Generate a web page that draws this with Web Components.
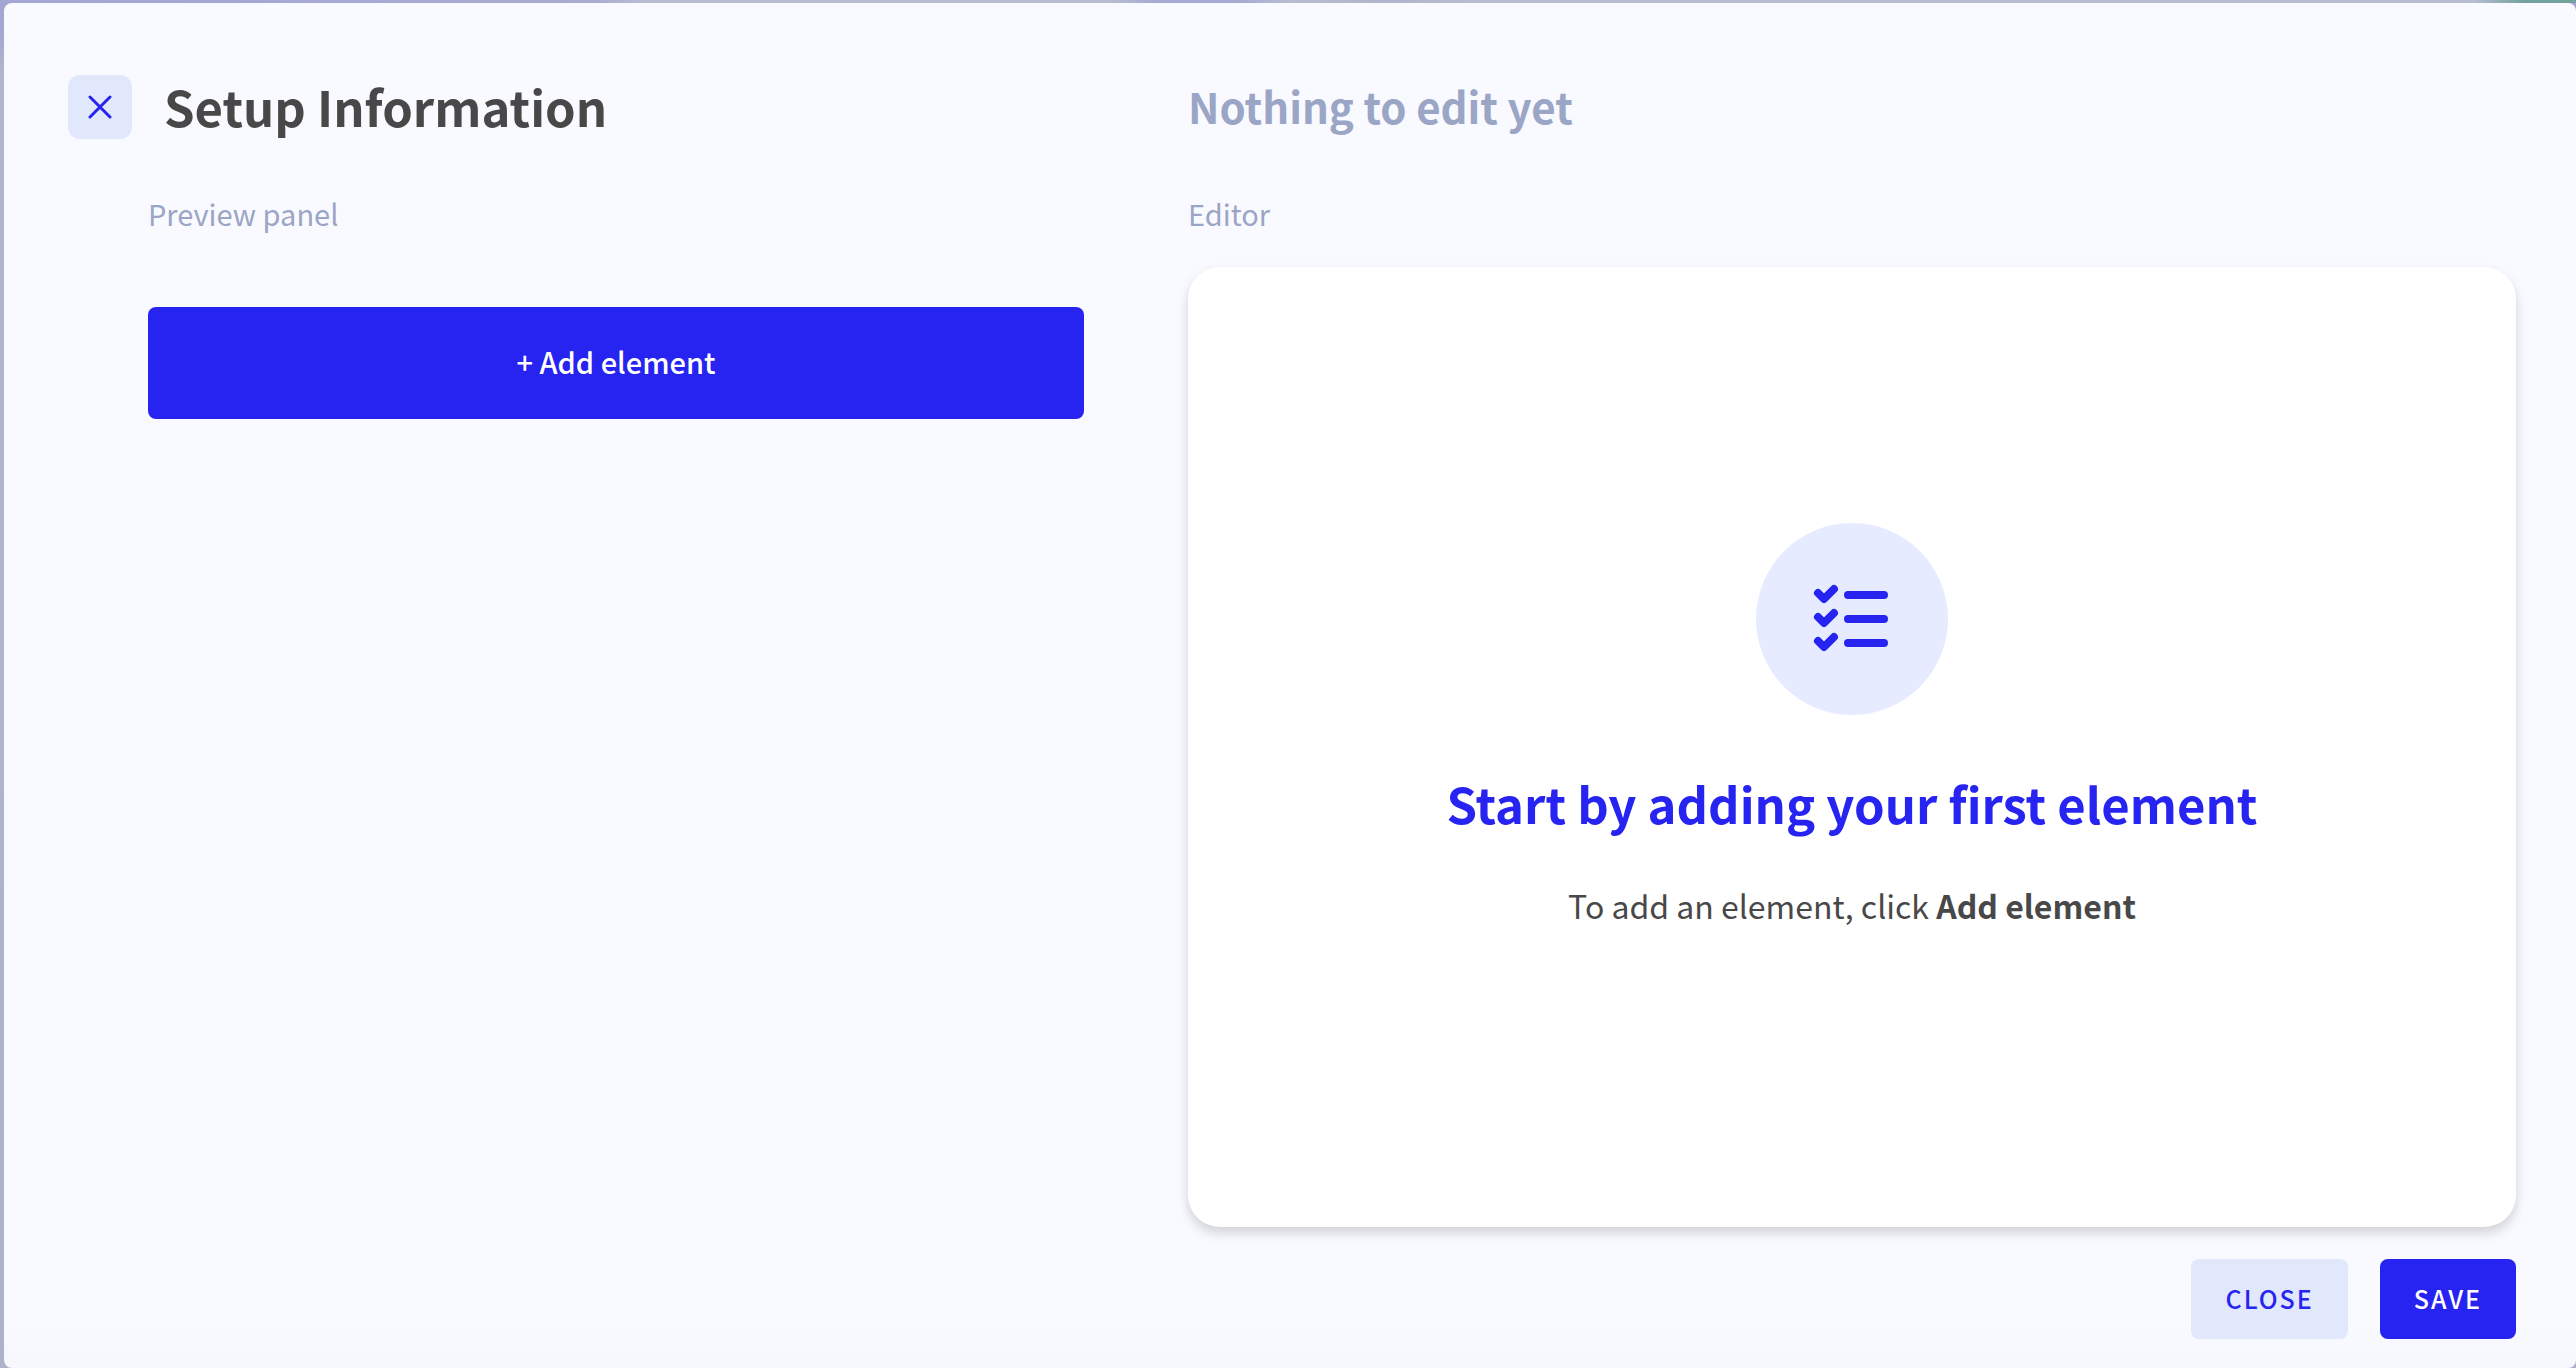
<!DOCTYPE html>
<html lang="en">
<head>
<meta charset="UTF-8">
<meta name="viewport" content="width=device-width, initial-scale=1.0">
<title>Setup Information</title>
<style>
  html, body {
    height: 100%;
    margin: 0;
  }
  body {
    font-family: "Noto Sans CJK SC", "Noto Sans", sans-serif;
    color: #484848;
    --primary: #2723f0;
    --primary-light: #e2e8fc;
    --muted: #9ba5c6;
    --surface: #f9faff;
  }
</style>
</head>
<body>
<setup-modal>
  <panel-header slot="preview-header" closable>Setup Information</panel-header>
  <preview-panel slot="preview"></preview-panel>
  <panel-header slot="editor-header" muted>Nothing to edit yet</panel-header>
  <editor-card slot="editor" label="Editor">
    <empty-state>
      <span slot="title">Start by adding your first element</span>
      To add an element, click <strong>Add element</strong>
    </empty-state>
  </editor-card>
  <app-button slot="actions" variant="light">CLOSE</app-button>
  <app-button slot="actions">SAVE</app-button>
</setup-modal>

<script>
class SetupModal extends HTMLElement {
  connectedCallback() {
    this.attachShadow({ mode: 'open' });
    this.shadowRoot.innerHTML = `
      <style>
        :host {
          display: flex;
          box-sizing: border-box;
          min-height: 100vh;
          padding: 3px 0 0 4px;
          background:
            linear-gradient(90deg, #a3a6d2 0, #a9abd2 23%, #b8bdd2 25%, #b8bdd2 43%, #a5aad2 45%, #a5aad2 48%, #b8bdd2 50%, #b0b4cc 54%, #b8bdd2 57%, #b8bdd2 96%, #73a29c 98%) top / 100% 3px no-repeat,
            linear-gradient(#a3a6d2 0, #a3a6d2 30px, #b0b6ce 70px, #adb2c8 100%);
        }
        .modal {
          flex: 1;
          display: grid;
          grid-template-columns: 70fr 83fr;
          grid-template-rows: auto 1fr auto;
          box-sizing: border-box;
          padding: 64px 60px 29px 64px;
          border-radius: 8px;
          background: linear-gradient(var(--surface) 97%, #f5f7fc);
        }
        .preview {
          padding: 0 104px 0 80px;
        }
        .editor {
          display: flex;
          flex-direction: column;
        }
        footer {
          grid-column: 1 / -1;
          display: flex;
          justify-content: flex-end;
          gap: 32px;
          padding-top: 32px;
        }
      </style>
      <main class="modal">
        <slot name="preview-header"></slot>
        <slot name="editor-header"></slot>
        <section class="preview"><slot name="preview"></slot></section>
        <section class="editor"><slot name="editor"></slot></section>
        <footer><slot name="actions"></slot></footer>
      </main>
    `;
  }
}
customElements.define('setup-modal', SetupModal);

class PanelHeader extends HTMLElement {
  connectedCallback() {
    const closable = this.hasAttribute('closable');
    const level = this.hasAttribute('muted') ? 'h2' : 'h1';
    this.attachShadow({ mode: 'open' });
    this.shadowRoot.innerHTML = `
      <style>
        :host {
          display: flex;
          align-items: center;
          gap: 32px;
          height: 80px;
        }
        h1, h2 {
          margin: 0;
          padding-bottom: 2px;
          font-size: 49px;
          font-weight: 700;
          line-height: 76px;
        }
        h2 {
          font-size: 42px;
          color: var(--muted);
        }
        button {
          display: flex;
          align-items: center;
          justify-content: center;
          width: 64px;
          height: 64px;
          padding: 0;
          border: 0;
          border-radius: 12px;
          background: var(--primary-light);
          color: var(--primary);
          cursor: pointer;
        }
      </style>
      ${closable ? `
      <button type="button" aria-label="Close">
        <svg width="24" height="24" viewBox="0 0 24 24" fill="none" stroke="currentColor" stroke-width="3" stroke-linecap="round">
          <path d="M2 2l20 20M22 2L2 22"/>
        </svg>
      </button>` : ''}
      <${level}><slot></slot></${level}>
    `;
  }
}
customElements.define('panel-header', PanelHeader);

class PreviewPanel extends HTMLElement {
  connectedCallback() {
    this.attachShadow({ mode: 'open' });
    this.shadowRoot.innerHTML = `
      <style>
        :host {
          display: block;
        }
        p {
          margin: 0 0 40px;
          padding: 46px 0 34px;
          font-size: 29px;
          line-height: 40px;
          color: var(--muted);
        }
        button {
          width: 100%;
          height: 112px;
          padding: 0 0 4px;
          border: 0;
          border-radius: 8px;
          background: var(--primary);
          color: #fff;
          font-family: inherit;
          font-size: 29px;
          font-weight: 500;
          cursor: pointer;
        }
      </style>
      <p>Preview panel</p>
      <button type="button">+ Add element</button>
    `;
  }
}
customElements.define('preview-panel', PreviewPanel);

class EditorCard extends HTMLElement {
  connectedCallback() {
    this.attachShadow({ mode: 'open' });
    this.shadowRoot.innerHTML = `
      <style>
        :host {
          flex: 1;
          display: flex;
          flex-direction: column;
        }
        p {
          margin: 0;
          padding: 46px 0 34px;
          font-size: 29px;
          line-height: 40px;
          color: var(--muted);
        }
        .card {
          flex: 1;
          display: flex;
          align-items: center;
          justify-content: center;
          padding-bottom: 36px;
          border-radius: 32px;
          background: #fff;
          box-shadow: 0 6px 12px rgba(0, 0, 0, 0.16);
        }
      </style>
      <p>${this.getAttribute('label')}</p>
      <div class="card"><slot></slot></div>
    `;
  }
}
customElements.define('editor-card', EditorCard);

class EmptyState extends HTMLElement {
  connectedCallback() {
    this.attachShadow({ mode: 'open' });
    this.shadowRoot.innerHTML = `
      <style>
        :host {
          display: flex;
          flex-direction: column;
          align-items: center;
          text-align: center;
        }
        svg {
          border-radius: 50%;
          background: #e6ebff;
          color: var(--primary);
        }
        h3 {
          margin: 48px 0 32px;
          font-size: 49px;
          font-weight: 700;
          line-height: 80px;
          color: var(--primary);
        }
        p {
          margin: 0;
          font-size: 32px;
          line-height: 60px;
        }
        ::slotted(strong) {
          font-weight: 700;
        }
      </style>
      <svg width="192" height="192" viewBox="0 0 192 192" fill="none" stroke="currentColor" stroke-width="8" stroke-linecap="round" stroke-linejoin="round" aria-hidden="true">
        <path d="M62 70l6 6 10-10M92 72h36"/>
        <path d="M62 94l6 6 10-10M92 96h36"/>
        <path d="M62 118l6 6 10-10M92 120h36"/>
      </svg>
      <h3><slot name="title"></slot></h3>
      <p><slot></slot></p>
    `;
  }
}
customElements.define('empty-state', EmptyState);

class AppButton extends HTMLElement {
  connectedCallback() {
    this.attachShadow({ mode: 'open' });
    this.shadowRoot.innerHTML = `
      <style>
        :host {
          display: block;
        }
        button {
          height: 80px;
          padding: 0 34px 2px;
          border: 0;
          border-radius: 8px;
          background: var(--primary);
          color: #fff;
          font-family: inherit;
          font-size: 25px;
          font-weight: 500;
          letter-spacing: 2px;
          cursor: pointer;
        }
        :host([variant="light"]) button {
          background: var(--primary-light);
          color: var(--primary);
        }
      </style>
      <button type="button"><slot></slot></button>
    `;
  }
}
customElements.define('app-button', AppButton);
</script>
</body>
</html>
